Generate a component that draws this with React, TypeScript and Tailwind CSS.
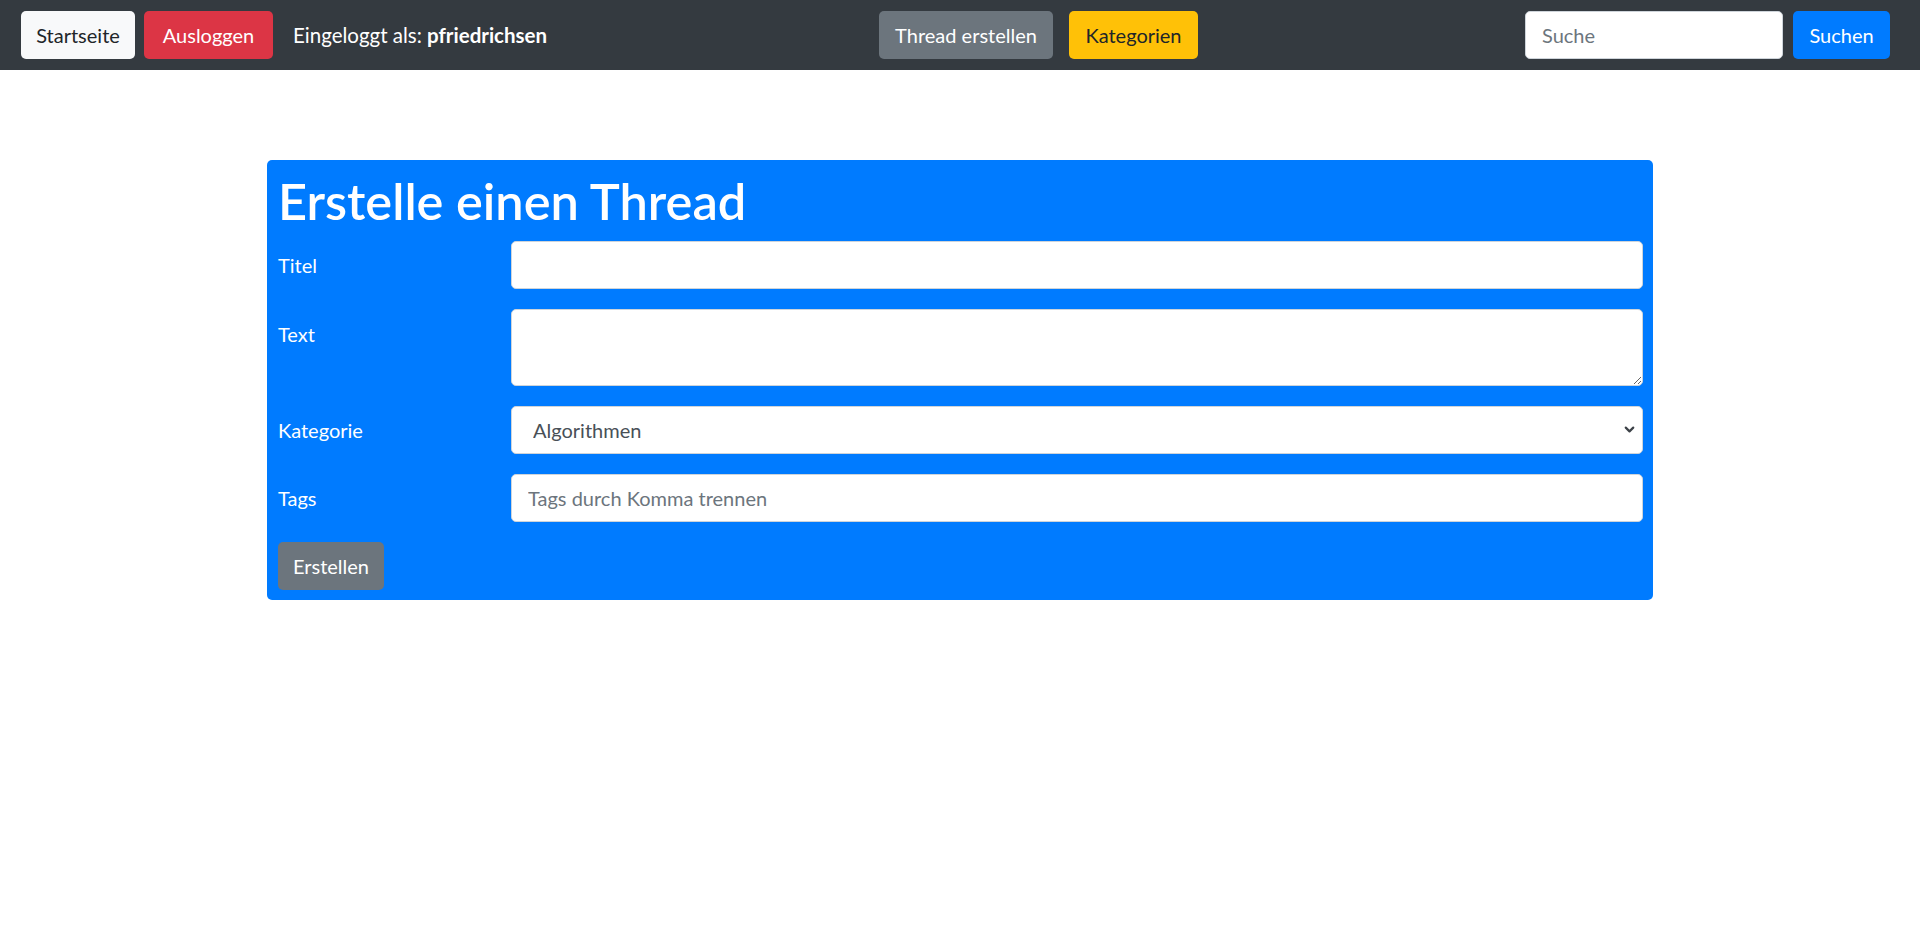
import { ChevronDown } from 'lucide-react'

const font = { fontFamily: 'Lato, "Noto Sans", sans-serif' }

function NavButton({ label, className }: { label: string; className: string }) {
  return (
    <button
      type="button"
      className={`h-12 shrink-0 rounded-[5px] text-[20px] leading-none flex items-center justify-center ${className}`}
    >
      {label}
    </button>
  )
}

function FormRow({ label, children, top = false }: { label: string; children: React.ReactNode; top?: boolean }) {
  return (
    <div className={`flex ${top ? 'items-start' : 'items-center'} mb-[20px]`}>
      <label className={`w-[233px] shrink-0 text-[20px] leading-[30px] text-white ${top ? 'pt-[10px]' : ''}`}>{label}</label>
      <div className="flex-1">{children}</div>
    </div>
  )
}

export default function App() {
  return (
    <div className="min-h-[937px] bg-white text-[#212529]" style={font}>
      {/* Navbar */}
      <nav className="h-[70px] bg-[#343a40] flex items-center pl-[21px] pr-[30px]">
        <div className="w-[858px] shrink-0 flex items-center">
          <NavButton label="Startseite" className="w-[114px] bg-[#f8f9fa] text-[#212529]" />
          <NavButton label="Ausloggen" className="w-[129px] ml-[9px] bg-[#dc3545] text-white" />
          <span className="ml-[20px] text-[20.5px] text-white whitespace-nowrap">
            Eingeloggt als: <strong className="font-bold">pfriedrichsen</strong>
          </span>
        </div>

        <div className="flex items-center">
          <NavButton label="Thread erstellen" className="w-[174px] bg-[#6c757d] text-white" />
          <NavButton label="Kategorien" className="w-[129px] ml-[16px] bg-[#ffc107] text-[#212529]" />
        </div>

        <div className="ml-auto flex items-center">
          <input
            placeholder="Suche"
            className="w-[258px] h-12 rounded-[5px] border border-[#ced4da] bg-white px-[16px] text-[20px] text-[#495057] placeholder:text-[#6c757d] outline-none"
          />
          <NavButton label="Suchen" className="w-[97px] ml-[10px] bg-[#007bff] text-white" />
        </div>
      </nav>

      {/* Form card */}
      <div className="mt-[90px] ml-[267px] w-[1386px] rounded-[5px] bg-[#007bff] pt-[11px] pl-[11px] pr-[10px] pb-[10px]">
        <h1 className="text-[50.5px] leading-[60px] font-semibold text-white mb-[10px]">Erstelle einen Thread</h1>

        <FormRow label="Titel">
          <input className="w-full h-12 rounded-[5px] border border-[#ced4da] bg-white px-[16px] text-[20px] text-[#495057] outline-none" />
        </FormRow>

        <FormRow label="Text" top>
          <textarea
            rows={2}
            className="block w-full h-[77px] rounded-[5px] border border-[#ced4da] bg-white px-[16px] py-[7px] text-[20px] text-[#495057] outline-none"
          />
        </FormRow>

        <FormRow label="Kategorie">
          <div className="relative">
            <select className="appearance-none w-full h-12 rounded-[5px] border border-[#ced4da] bg-white pl-[21px] text-[20px] text-[#495057] outline-none">
              <option>Algorithmen</option>
            </select>
            <ChevronDown className="pointer-events-none absolute right-[6px] top-[16px] w-[15px] h-[15px] text-[#3d4248]" strokeWidth={3.5} />
          </div>
        </FormRow>

        <FormRow label="Tags">
          <input
            placeholder="Tags durch Komma trennen"
            className="w-full h-12 rounded-[5px] border border-[#ced4da] bg-white px-[16px] text-[20px] text-[#495057] placeholder:text-[#6c757d] outline-none"
          />
        </FormRow>

        <button
          type="button"
          className="w-[106px] h-12 rounded-[5px] bg-[#6c757d] text-white text-[20px] flex items-center justify-center"
        >
          Erstellen
        </button>
      </div>
    </div>
  )
}
